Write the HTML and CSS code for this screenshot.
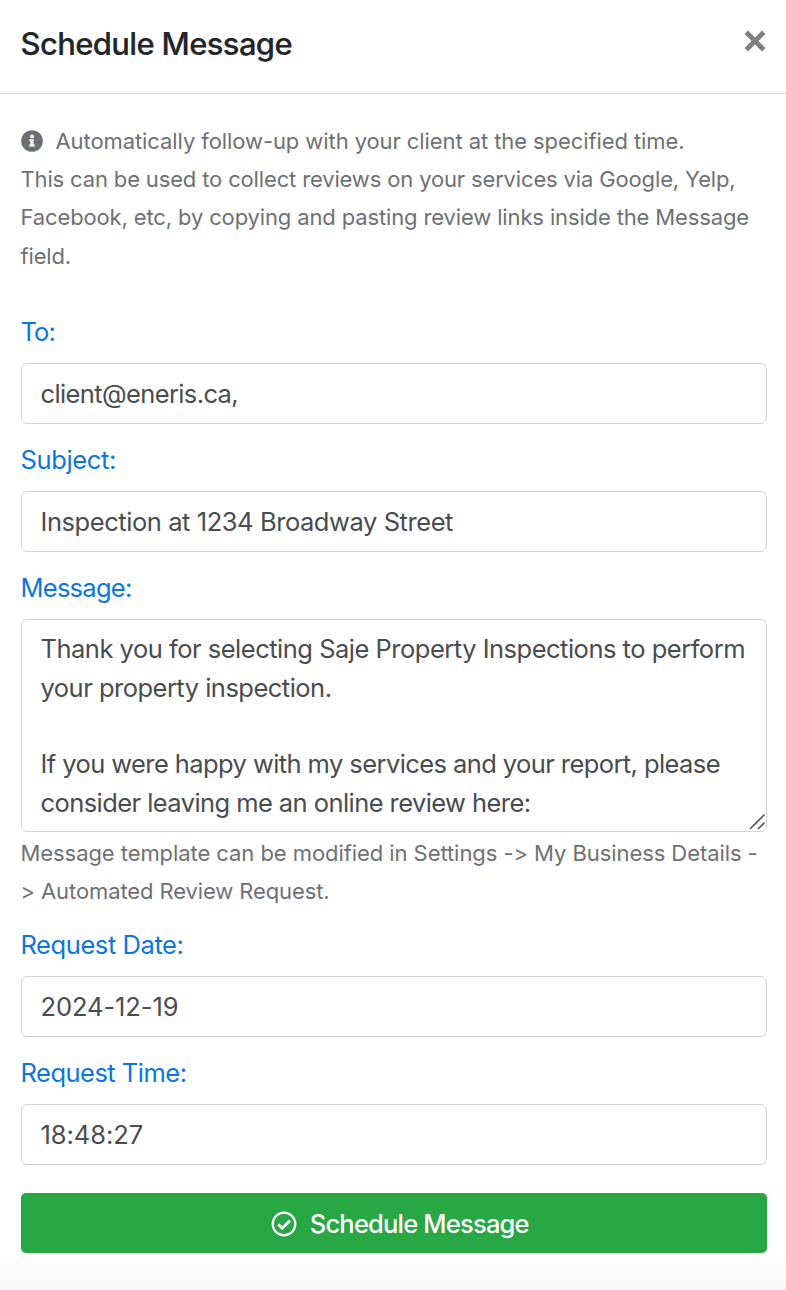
FILE: index.html
```html
<!DOCTYPE html>
<html lang="en">
<head>
<meta charset="utf-8">
<title>Schedule Message</title>
<link rel="stylesheet" href="styles.css">
</head>
<body>
<div class="modal">
  <header class="modal-header">
    <h1 class="title"><span class="fit" data-w="271.5">Schedule Message</span></h1>
    <button class="close" aria-label="Close"><svg viewBox="0 0 22 22" width="22" height="22"><path d="M4 4 18 18M18 4 4 18" fill="none" stroke="#7f7f7f" stroke-width="4.8" stroke-linecap="square"/></svg></button>
  </header>
  <main class="modal-body">
    <p class="help intro">
      <span class="line"><svg class="info" viewBox="0 0 22 22" width="22" height="22"><circle cx="11" cy="11" r="10.8" fill="#6c7075"/><circle cx="11" cy="6.4" r="1.9" fill="#fff"/><path d="M8.3 9.2h4.3v5.4h1.2v2H8.2v-2h1.2v-3.4H8.3z" fill="#fff"/></svg><span class="fit" data-w="629">Automatically follow-up with your client at the specified time.</span></span>
      <span class="line"><span class="fit" data-w="715">This can be used to collect reviews on your services via Google, Yelp,</span></span>
      <span class="line"><span class="fit" data-w="728.5">Facebook, etc, by copying and pasting review links inside the Message</span></span>
      <span class="line"><span class="fit" data-w="50.5">field.</span></span>
    </p>
    <div class="group">
      <div class="label"><span class="fit" data-w="34.5">To:</span></div>
      <div class="control"><span class="fit" data-w="197.5">client@eneris.ca,</span></div>
    </div>
    <div class="group">
      <div class="label"><span class="fit" data-w="95.5">Subject:</span></div>
      <div class="control"><span class="fit" data-w="412.5">Inspection at 1234 Broadway Street</span></div>
    </div>
    <div class="group message">
      <div class="label"><span class="fit" data-w="111">Message:</span></div>
      <div class="control area">
        <span class="line"><span class="fit" data-w="704.5">Thank you for selecting Saje Property Inspections to perform</span></span>
        <span class="line"><span class="fit" data-w="291">your property inspection.</span></span>
        <span class="line"></span>
        <span class="line"><span class="fit" data-w="679.5">If you were happy with my services and your report, please</span></span>
        <span class="line"><span class="fit" data-w="490">consider leaving me an online review here:</span></span>
        <svg class="grip" viewBox="0 0 18 18" width="18" height="18"><path d="M2 16 16.5 1.5M10 16l6.5-6.5" fill="none" stroke="#555" stroke-width="1.7"/></svg>
      </div>
      <p class="help note">
        <span class="line"><span class="fit" data-w="733.5">Message template can be modified in Settings -&gt; My Business Details -</span></span>
        <span class="line"><span class="fit" data-w="309">&gt; Automated Review Request.</span></span>
      </p>
    </div>
    <div class="group">
      <div class="label"><span class="fit" data-w="163">Request Date:</span></div>
      <div class="control"><span class="fit" data-w="138">2024-12-19</span></div>
    </div>
    <div class="group">
      <div class="label"><span class="fit" data-w="166">Request Time:</span></div>
      <div class="control"><span class="fit" data-w="102.5">18:48:27</span></div>
    </div>
    <button class="submit"><svg viewBox="0 0 26 26" width="26" height="26"><circle cx="13" cy="13" r="11.3" fill="none" stroke="#fff" stroke-width="2.2"/><path d="m7.2 13.2 4 4 7.8-7.8" fill="none" stroke="#fff" stroke-width="2.8"/></svg><span class="fit" data-w="219">Schedule Message</span></button>
  </main>
</div>
<script src="fit.js"></script>
</body>
</html>
```

FILE: styles.css
```css
* { box-sizing: border-box; }
body { margin: 0; background: #fff; font-family: Inter, "Liberation Sans", sans-serif; color: #494c50; }
.modal { height: 1290px; overflow: hidden; background: linear-gradient(#fff 1258px, #f7f7f7 1290px); }
.modal-header { height: 94px; padding: 0 20px 6px 21px; display: flex; align-items: center; justify-content: space-between; border-bottom: 1px solid #dcdfe1; }
.title { margin: 0; font-size: 31px; line-height: 46px; font-weight: 500; color: #212529; -webkit-text-stroke: 0.2px #212529; }
.close { display: flex; padding: 0; margin-bottom: 6px; border: 0; background: none; }
.modal-body { padding: 27.6px 19px 0 21px; }
.fit { display: inline-block; white-space: nowrap; margin-left: -0.5px; }
.line { display: flex; align-items: center; height: 38.3px; }
.help { margin: 0; font-size: 22px; color: #6e7174; }
.intro { height: 190.4px; }
.info { margin-right: 13px; }
.group { height: 128px; }
.label { height: 51px; padding-top: 1px; line-height: 38px; font-size: 25.5px; color: #0b76df; }
.control { height: 61px; padding: 0 19px; display: flex; align-items: center; border: 1px solid #d0d3d6; border-radius: 6px; font-size: 25.5px; color: #494c50; }
.message { height: 357px; }
.area { position: relative; display: block; height: 213px; padding-top: 9.8px; overflow: hidden; }
.area .line { height: 38.3px; }
.grip { position: absolute; right: 0; bottom: 0; }
.note { padding-top: 2px; }
.submit { width: 100%; height: 60px; margin-top: 12px; padding: 2px 0 0 12px; display: flex; align-items: center; justify-content: center; gap: 13px; border: 0; border-radius: 5px; background: #28a745; color: #fff; font: 500 25.5px Inter, sans-serif; }
```

FILE: fit.js
```js
// Adjusts tracking so each text line keeps its intended measure.
document.querySelectorAll('.fit').forEach(function (el) {
  var diff = Number(el.dataset.w) - el.getBoundingClientRect().width;
  el.style.letterSpacing = diff / el.textContent.length + 'px';
});
```
